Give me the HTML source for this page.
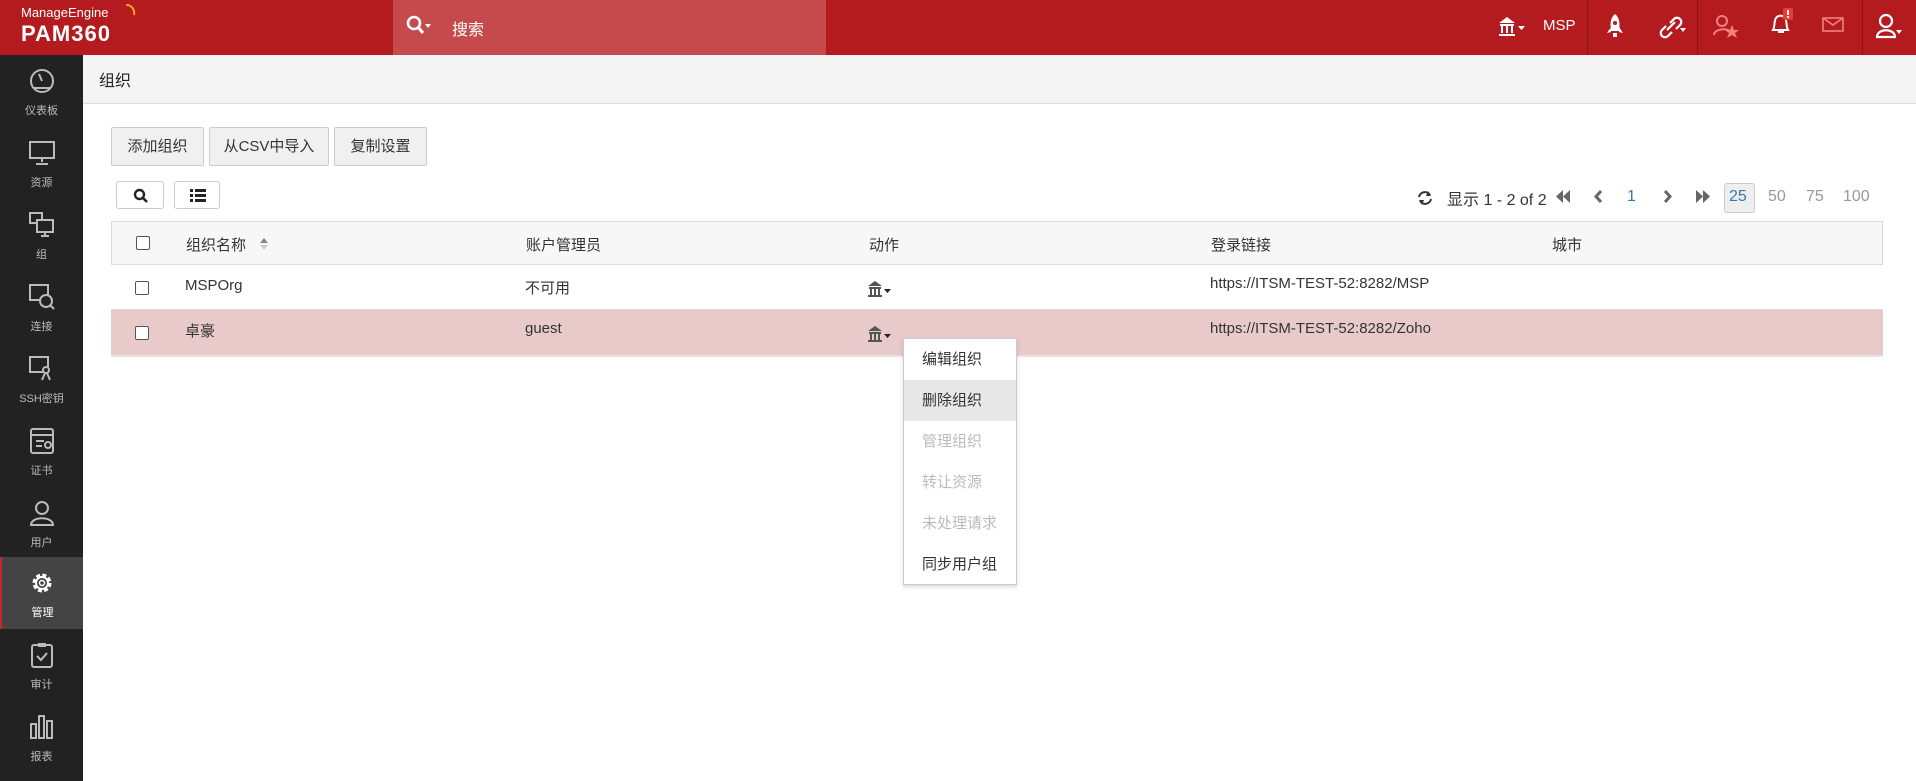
<!DOCTYPE html>
<html><head><meta charset="utf-8"><style>
*{box-sizing:border-box;margin:0;padding:0}
body{width:1916px;height:781px;overflow:hidden;font-family:"Liberation Sans","Noto Sans CJK SC",sans-serif;font-size:15px;color:#333;background:#fff;position:relative}
.abs{position:absolute}
#hdr{left:0;top:0;width:1916px;height:55px;background:#b31b1e}
#search{left:393px;top:0;width:433px;height:55px;background:#c64a4b;color:#fff}
#side{left:0;top:55px;width:83px;height:726px;background:#222}
.si{position:absolute;left:0;width:83px;height:72px;text-align:center;color:#bbb;font-size:11px}
.si svg{position:absolute;left:29px;top:13px}
.si span{position:absolute;left:0;right:0;top:47px}
#tbar{left:83px;top:55px;width:1833px;height:49px;background:#f4f4f4;border-bottom:1px solid #ddd}
.btn{position:absolute;top:127px;height:39px;background:#f0f0f0;border:1px solid #ccc;border-radius:2px;line-height:37px;text-align:center;font-size:15px}
.ib{position:absolute;top:181px;height:28px;background:#fff;border:1px solid #ccc;border-radius:3px}
.pg{position:absolute;top:188px;font-size:16px;color:#999}
.row{position:absolute;left:111px;width:1772px}
.cb{position:absolute;left:24px;width:14px;height:14px;border:1px solid #555;border-radius:2px;background:#fff}
.c{position:absolute;font-size:15px}
.dd{left:903px;top:338px;width:114px;height:247px;background:#fff;border:1px solid #ccc;box-shadow:0 2px 4px rgba(0,0,0,.15)}
.dd div{height:41px;line-height:41px;padding-left:18px;font-size:15px}
</style></head><body>
<div id="hdr" class="abs">
 <div class="abs" style="left:21px;top:5px;color:#fff;font-size:13px;">ManageEngine</div>
 <svg class="abs" style="left:124px;top:3px" width="12" height="14"><path d="M2 2 A8 8 0 0 1 10 12" stroke="#f5a623" stroke-width="2" fill="none"/></svg>
 <div class="abs" style="left:21px;top:21px;color:#fff;font-size:22px;font-weight:bold;letter-spacing:1px">PAM360</div>
 <div class="abs" style="left:1587px;top:0;width:1px;height:55px;background:#8c1316"></div>
 <div class="abs" style="left:1697px;top:0;width:1px;height:55px;background:#8c1316"></div>
 <div class="abs" style="left:1862px;top:0;width:1px;height:55px;background:#8c1316"></div>
 <svg class="abs" style="left:1497px;top:15px" width="32" height="24"><path d="M2 8 L10 2 L18 8 Z M3 9h14v2H3z M4 11h2v7H4z M9 11h2v7H9z M14 11h2v7h-2z M2 19h16v2H2z" fill="#fff"/><path d="M21 11h7l-3.5 4z" fill="#fff"/></svg>
 <div class="abs" style="left:1543px;top:17px;color:#fff;font-size:15px">MSP</div>
 <svg class="abs" style="left:1606px;top:13px" width="18" height="26"><path d="M9 1 C14 5 14 12 13 18 H5 C4 12 4 5 9 1Z M5 14 L1 20 L5 19Z M13 14 L17 20 L13 19Z M7 20h4v4H7z" fill="#fff"/><circle cx="9" cy="10" r="2" fill="#b31b1e"/></svg>
 <svg class="abs" style="left:1657px;top:13px" width="30" height="26"><path d="M9 13 L5 17 a4 4 0 0 0 6 6 l4 -4 M13 10 L17 6 a4 4 0 0 1 6 6 l-4 4 M10 17 L18 9" stroke="#fff" stroke-width="2.2" fill="none"/><path d="M23 15h6l-3 4z" fill="#fff"/></svg>
 <svg class="abs" style="left:1712px;top:13px" width="28" height="26"><circle cx="10" cy="8" r="5" stroke="#f08080" stroke-width="2" fill="none"/><path d="M2 22 C2 15 18 15 18 19" stroke="#f08080" stroke-width="2" fill="none"/><path d="M20 12 l2 5 5 0 -4 3 2 5 -5 -3 -5 3 2 -5 -4 -3 5 0z" fill="#f08080"/></svg>
 <svg class="abs" style="left:1768px;top:8px" width="28" height="30"><path d="M5 22 C7 19 6 12 8 10 C10 7 15 7 17 10 C19 12 18 19 20 22 Z M10 24h6" stroke="#fff" stroke-width="2" fill="none"/><rect x="15" y="0" width="10" height="12" rx="2" fill="#ef3b35"/><rect x="19" y="2" width="2" height="5" fill="#fff"/><rect x="19" y="8" width="2" height="2" fill="#fff"/></svg>
 <svg class="abs" style="left:1822px;top:17px" width="22" height="16"><rect x="1" y="1" width="20" height="13" stroke="#f08080" stroke-width="1.6" fill="none"/><path d="M1 1 L11 8 L21 1" stroke="#f08080" stroke-width="1.6" fill="none"/></svg>
 <svg class="abs" style="left:1875px;top:13px" width="28" height="26"><circle cx="11" cy="8" r="6" stroke="#fff" stroke-width="2.2" fill="none"/><path d="M2 24 C2 15 20 15 20 24 Z" stroke="#fff" stroke-width="2.2" fill="none"/><path d="M21 17h6l-3 4z" fill="#fff"/></svg>
</div>
<div id="search" class="abs">
 <svg class="abs" style="left:13px;top:15px" width="26" height="22"><circle cx="8" cy="8" r="6" stroke="#fff" stroke-width="2.6" fill="none"/><path d="M12 12 L17 18" stroke="#fff" stroke-width="3"/><path d="M19 9h6l-3 4z" fill="#fff"/></svg>
 <div class="abs" style="left:59px;top:16px;font-size:16px">搜索</div>
</div>
<div id="side" class="abs">
 <div class="si" style="top:0"><svg width="26" height="26"><circle cx="13" cy="13" r="11" stroke="#bbb" stroke-width="2" fill="none"/><path d="M13 13 L10 6" stroke="#bbb" stroke-width="2"/><path d="M5 20h16" stroke="#bbb" stroke-width="2"/></svg><span>仪表板</span></div>
 <div class="si" style="top:72px"><svg width="26" height="26"><rect x="1" y="2" width="24" height="16" stroke="#bbb" stroke-width="2" fill="none"/><path d="M13 18v4M7 24h12" stroke="#bbb" stroke-width="2"/></svg><span>资源</span></div>
 <div class="si" style="top:144px"><svg width="26" height="26"><rect x="1" y="1" width="12" height="10" stroke="#bbb" stroke-width="2" fill="none"/><rect x="8" y="8" width="16" height="12" stroke="#bbb" stroke-width="2" fill="#222"/><path d="M16 20v4M12 24h8" stroke="#bbb" stroke-width="2"/></svg><span>组</span></div>
 <div class="si" style="top:216px"><svg width="26" height="26"><rect x="1" y="1" width="18" height="15" stroke="#bbb" stroke-width="2" fill="none"/><circle cx="17" cy="17" r="6" stroke="#bbb" stroke-width="2" fill="#222"/><path d="M21 21l4 4" stroke="#bbb" stroke-width="2"/></svg><span>连接</span></div>
 <div class="si" style="top:288px"><svg width="26" height="26"><rect x="1" y="1" width="18" height="15" stroke="#bbb" stroke-width="2" fill="none"/><circle cx="17" cy="14" r="3" stroke="#bbb" stroke-width="2" fill="#222"/><path d="M16 17l-3 7M18 17l3 7" stroke="#bbb" stroke-width="2"/></svg><span>SSH密钥</span></div>
 <div class="si" style="top:360px"><svg width="26" height="26"><rect x="2" y="1" width="22" height="24" rx="2" stroke="#bbb" stroke-width="2" fill="none"/><path d="M2 7h22M7 13h8M7 18h6" stroke="#bbb" stroke-width="2"/><circle cx="19" cy="17" r="3" stroke="#bbb" stroke-width="2" fill="none"/></svg><span>证书</span></div>
 <div class="si" style="top:432px"><svg width="26" height="26"><circle cx="13" cy="8" r="6" stroke="#bbb" stroke-width="2" fill="none"/><path d="M2 25 C2 16 24 16 24 25Z" stroke="#bbb" stroke-width="2" fill="none"/></svg><span>用户</span></div>
 <div class="si" style="top:502px;background:#444;border-left:2px solid #c0282b;color:#fff;height:72px"><svg width="26" height="26" style="left:27px"><circle cx="13" cy="13" r="8" stroke="#fff" stroke-width="3" stroke-dasharray="4 2.3" fill="none"/><circle cx="13" cy="13" r="6" stroke="#fff" stroke-width="2" fill="none"/><circle cx="13" cy="13" r="2.5" stroke="#fff" stroke-width="1.5" fill="none"/></svg><span>管理</span></div>
 <div class="si" style="top:574px"><svg width="26" height="26"><rect x="3" y="3" width="20" height="22" rx="2" stroke="#bbb" stroke-width="2" fill="none"/><rect x="9" y="1" width="8" height="4" fill="#bbb"/><path d="M8 14l4 4 6-7" stroke="#bbb" stroke-width="2" fill="none"/></svg><span>审计</span></div>
 <div class="si" style="top:646px"><svg width="26" height="26"><rect x="2" y="10" width="5" height="14" stroke="#bbb" stroke-width="2" fill="none"/><rect x="10" y="2" width="5" height="22" stroke="#bbb" stroke-width="2" fill="none"/><rect x="18" y="7" width="5" height="17" stroke="#bbb" stroke-width="2" fill="none"/></svg><span>报表</span></div>
</div>
<div id="tbar" class="abs"><div class="abs" style="left:16px;top:12px;font-size:16px;color:#222">组织</div></div>
<div class="btn" style="left:111px;width:93px">添加组织</div>
<div class="btn" style="left:209px;width:120px">从CSV中导入</div>
<div class="btn" style="left:334px;width:93px">复制设置</div>
<div class="ib" style="left:116px;width:48px"><svg class="abs" style="left:16px;top:6px" width="16" height="16"><circle cx="6.5" cy="6.5" r="4.5" stroke="#222" stroke-width="2.4" fill="none"/><path d="M10 10l4 4" stroke="#222" stroke-width="2.6"/></svg></div>
<div class="ib" style="left:174px;width:46px"><svg class="abs" style="left:15px;top:7px" width="16" height="14"><path d="M0 0h3v3H0zM5 0h11v3H5zM0 5h3v3H0zM5 5h11v3H5zM0 10h3v3H0zM5 10h11v3H5z" fill="#222"/></svg></div>
<svg class="abs" style="left:1417px;top:190px" width="16" height="16"><path d="M2 7 A6 6 0 0 1 13 5 M14 9 A6 6 0 0 1 3 11" stroke="#333" stroke-width="2" fill="none"/><path d="M11 1l3 5-5 0z M5 15l-3-5 5 0z" fill="#333"/></svg>
<div class="pg" style="left:1447px;top:186px;color:#333">显示 1 - 2 of 2</div>
<svg class="abs" style="left:1556px;top:190px" width="14" height="13"><path d="M7 0v13L0 6.5zM14 0v13L7 6.5z" fill="#666"/></svg>
<svg class="abs" style="left:1593px;top:190px" width="10" height="13"><path d="M8 1L3 6.5 8 12" stroke="#666" stroke-width="3" fill="none"/></svg>
<div class="pg" style="left:1627px;color:#337ab7">1</div>
<svg class="abs" style="left:1663px;top:190px" width="10" height="13"><path d="M2 1l5 5.5L2 12" stroke="#666" stroke-width="3" fill="none"/></svg>
<svg class="abs" style="left:1696px;top:190px" width="14" height="13"><path d="M0 0v13l7-6.5zM7 0v13l7-6.5z" fill="#666"/></svg>
<div class="abs" style="left:1724px;top:183px;width:31px;height:30px;background:#eee;border:1px solid #ccc;border-radius:3px"></div>
<div class="pg" style="left:1729px;color:#337ab7">25</div>
<div class="pg" style="left:1768px">50</div>
<div class="pg" style="left:1806px">75</div>
<div class="pg" style="left:1843px">100</div>
<div class="row" style="top:221px;height:44px;background:#f7f7f7;border:1px solid #ddd;border-bottom:1px solid #ddd">
 <div class="cb" style="top:14px"></div>
 <div class="c" style="left:74px;top:12px">组织名称</div>
 <svg class="abs" style="left:148px;top:16px" width="8" height="12"><path d="M0 5h8L4 0z" fill="#888"/><path d="M0 7h8l-4 5z" fill="#ccc"/></svg>
 <div class="c" style="left:414px;top:12px">账户管理员</div>
 <div class="c" style="left:757px;top:12px">动作</div>
 <div class="c" style="left:1099px;top:12px">登录链接</div>
 <div class="c" style="left:1440px;top:12px">城市</div>
</div>
<div class="row" style="top:265px;height:45px;background:#fff;border-bottom:1px solid #ddd">
 <div class="cb" style="top:16px"></div>
 <div class="c" style="left:74px;top:12px">MSPOrg</div>
 <div class="c" style="left:414px;top:12px">不可用</div>
 <svg class="abs" style="left:756px;top:15px" width="26" height="18"><path d="M1 6 L8 1 L15 6Z M2 7h12v2H2z M3 9h2v6H3z M7 9h2v6H7z M11 9h2v6h-2z M1 15h14v2H1z" fill="#555"/><path d="M17 9h7l-3.5 4z" fill="#222"/></svg>
 <div class="c" style="left:1099px;top:10px">https://ITSM-TEST-52:8282/MSP</div>
</div>
<div class="row" style="top:310px;height:47px;background:#e8caca;border-bottom:2px solid #e4e4e4">
 <div class="cb" style="top:16px"></div>
 <div class="c" style="left:74px;top:10px">卓豪</div>
 <div class="c" style="left:414px;top:10px">guest</div>
 <svg class="abs" style="left:756px;top:15px" width="26" height="18"><path d="M1 6 L8 1 L15 6Z M2 7h12v2H2z M3 9h2v6H3z M7 9h2v6H7z M11 9h2v6h-2z M1 15h14v2H1z" fill="#555"/><path d="M17 9h7l-3.5 4z" fill="#222"/></svg>
 <div class="c" style="left:1099px;top:10px">https://ITSM-TEST-52:8282/Zoho</div>
</div>
<div class="dd abs">
 <div>编辑组织</div>
 <div style="background:#e8e8e8">删除组织</div>
 <div style="color:#bbb">管理组织</div>
 <div style="color:#bbb">转让资源</div>
 <div style="color:#bbb">未处理请求</div>
 <div>同步用户组</div>
</div>
</body></html>
